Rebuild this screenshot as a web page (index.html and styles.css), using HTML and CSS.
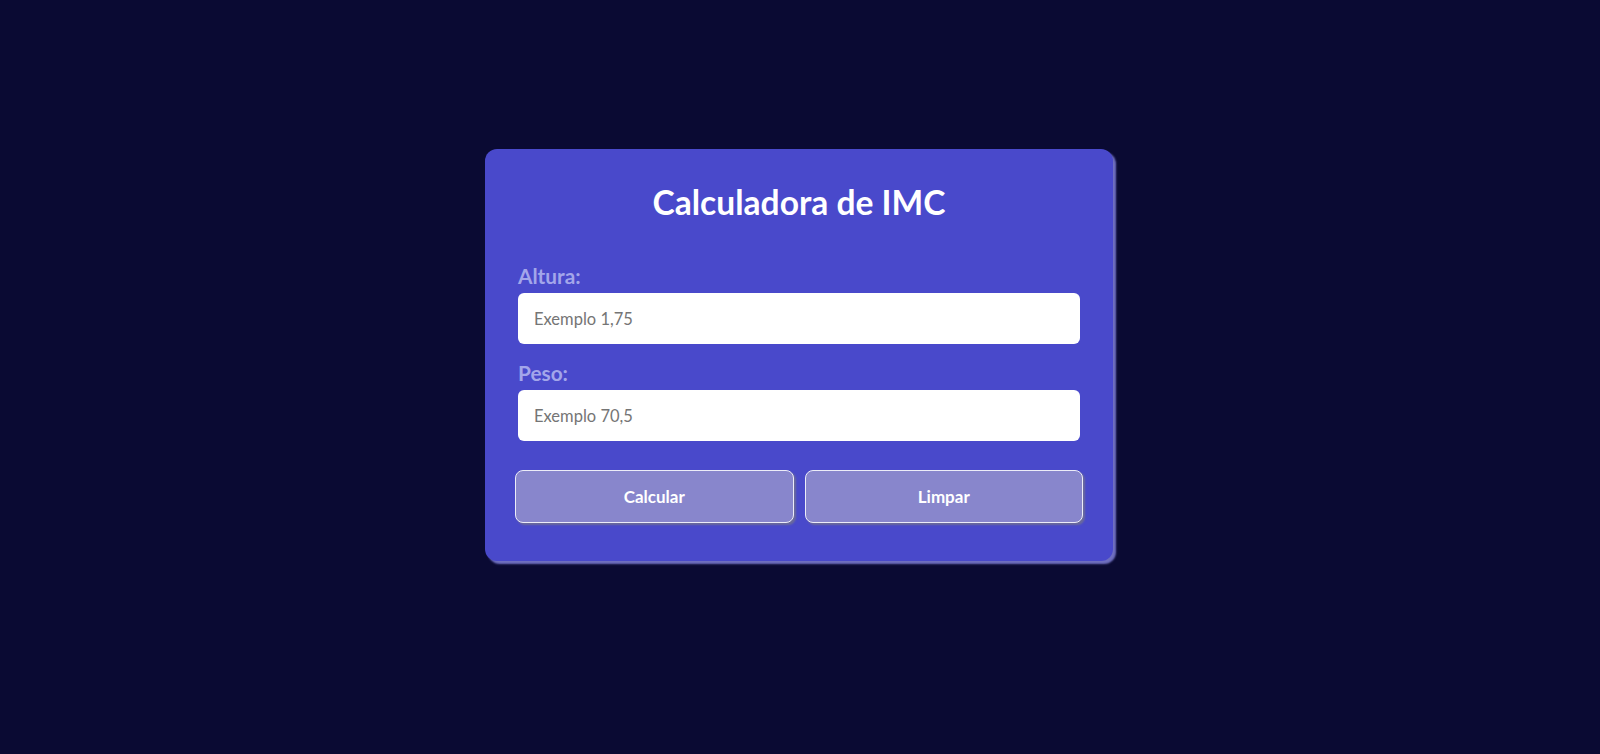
FILE: index.html
```html
<!DOCTYPE html>
<html lang="pt-BR">
<head>
<meta charset="utf-8">
<title>Calculadora de IMC</title>
<link rel="stylesheet" href="styles.css">
</head>
<body>
<main class="page">
  <section class="card">
    <h1 class="title">Calculadora de IMC</h1>
    <form class="form">
      <label class="label" for="altura">Altura:</label>
      <input class="input" id="altura" type="text" placeholder="Exemplo 1,75">
      <label class="label" for="peso">Peso:</label>
      <input class="input" id="peso" type="text" placeholder="Exemplo 70,5">
      <div class="actions">
        <button type="button" class="btn">Calcular</button>
        <button type="reset" class="btn">Limpar</button>
      </div>
    </form>
  </section>
</main>
</body>
</html>
```

FILE: styles.css
```css
* { box-sizing: border-box; }
html, body { margin: 0; padding: 0; }
body {
  background: #0a0a33;
  font-family: Lato, "Liberation Sans", sans-serif;
  min-height: 754px;
}
.page {
  display: flex;
  justify-content: center;
  padding-top: 149px;
}
.card {
  width: 628px;
  height: 412px;
  background: #4949cb;
  border-radius: 12px;
  box-shadow: 3px 3px 2px #6f6fc0;
  padding: 32px 33px 0 33px;
  margin-right: 2px;
}
.title {
  margin: 0;
  text-align: center;
  color: #ffffff;
  font-size: 33.6px;
  font-weight: 700;
  line-height: 42px;
}
.form {
  display: flex;
  flex-direction: column;
  margin-top: 40px;
}
.label {
  color: #a3a6ea;
  font-size: 20.8px;
  font-weight: 700;
  line-height: 26px;
  margin-bottom: 4px;
}
.input {
  height: 51px;
  border: none;
  border-radius: 6px;
  background: #ffffff;
  padding: 0 16px;
  font-family: Lato, "Liberation Sans", sans-serif;
  font-size: 16.5px;
  color: #333;
  margin-bottom: 16px;
  outline: none;
}
.input::placeholder { color: #757575; }
.actions {
  display: flex;
  gap: 11px;
  margin: 13px -3px 0 -3px;
}
.btn {
  flex: 1;
  height: 53px;
  background: #8886cc;
  border: 1.5px solid #ececf8;
  border-radius: 8px;
  box-shadow: 2px 2px 2px #6b6b9b;
  color: #ffffff;
  font-family: Lato, "Liberation Sans", sans-serif;
  font-size: 17px;
  font-weight: 700;
  cursor: pointer;
}
```
